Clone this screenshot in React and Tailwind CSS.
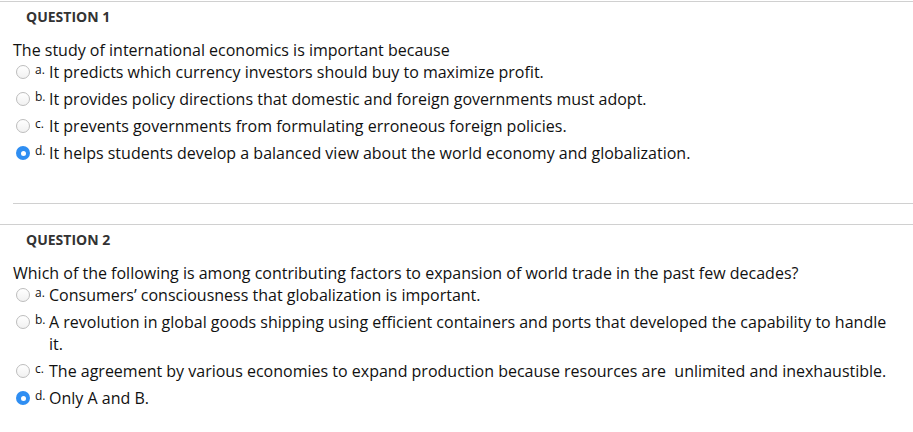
const questions = [
  {
    title: "QUESTION 1",
    text: "The study of international economics is important because",
    selected: "d",
    options: [
      ["a", "It predicts which currency investors should buy to maximize profit."],
      ["b", "It provides policy directions that domestic and foreign governments must adopt."],
      ["c", "It prevents governments from formulating erroneous foreign policies."],
      ["d", "It helps students develop a balanced view about the world economy and globalization."],
    ],
  },
  {
    title: "QUESTION 2",
    text: "Which of the following is among contributing factors to expansion of world trade in the past few decades?",
    selected: "d",
    options: [
      ["a", "Consumers\u2019 consciousness that globalization is important."],
      ["b", "A revolution in global goods shipping using efficient containers and ports that developed the capability to handle it."],
      ["c", "The agreement by various economies to expand production because resources are\u00a0 unlimited and inexhaustible."],
      ["d", "Only A and B."],
    ],
  },
];

function Radio({ checked }) {
  if (checked) {
    return (
      <span className="mt-[4px] flex h-[14px] w-[14px] shrink-0 items-center justify-center rounded-full bg-[#2f8ef2]">
        <span className="h-[5px] w-[5px] rounded-full bg-white" />
      </span>
    );
  }
  return (
    <span className="mt-[4px] h-[14px] w-[14px] shrink-0 rounded-full border border-[#bdbdbd] bg-gradient-to-b from-white to-[#f1f1f1]" />
  );
}

function Question({ q }) {
  return (
    <section>
      <h2 className="pl-[26px] pt-[5px] text-[14px] font-bold leading-[20px] text-[#333]">{q.title}</h2>
      <div className="pl-[13px] pr-[20px] pt-[13px]">
        <p className="text-[16px] leading-[20px] text-[#111]">{q.text}</p>
        <ul className="mt-[1px]">
          {q.options.map(([key, label]) => (
            <li key={key} className="flex pb-[5px] pl-[3px]">
              <Radio checked={q.selected === key} />
              <span className="ml-[5px] w-[14px] shrink-0 pt-[1px] text-[12px] leading-[16px] text-[#111]">{key}.</span>
              <span className="text-[16px] leading-[22px] text-[#111]">{label}</span>
            </li>
          ))}
        </ul>
      </div>
    </section>
  );
}

export default function App() {
  return (
    <div className="min-h-[432px] bg-white pt-px font-['Open_Sans',sans-serif]">
      <div className="border-t border-[#d0d0d0]">
        <Question q={questions[0]} />
      </div>
      <div className="mt-[34px] ml-[13px] border-t border-[#d0d0d0]" />
      <div className="mt-[20px] border-t border-[#d0d0d0]">
        <Question q={questions[1]} />
      </div>
    </div>
  );
}
